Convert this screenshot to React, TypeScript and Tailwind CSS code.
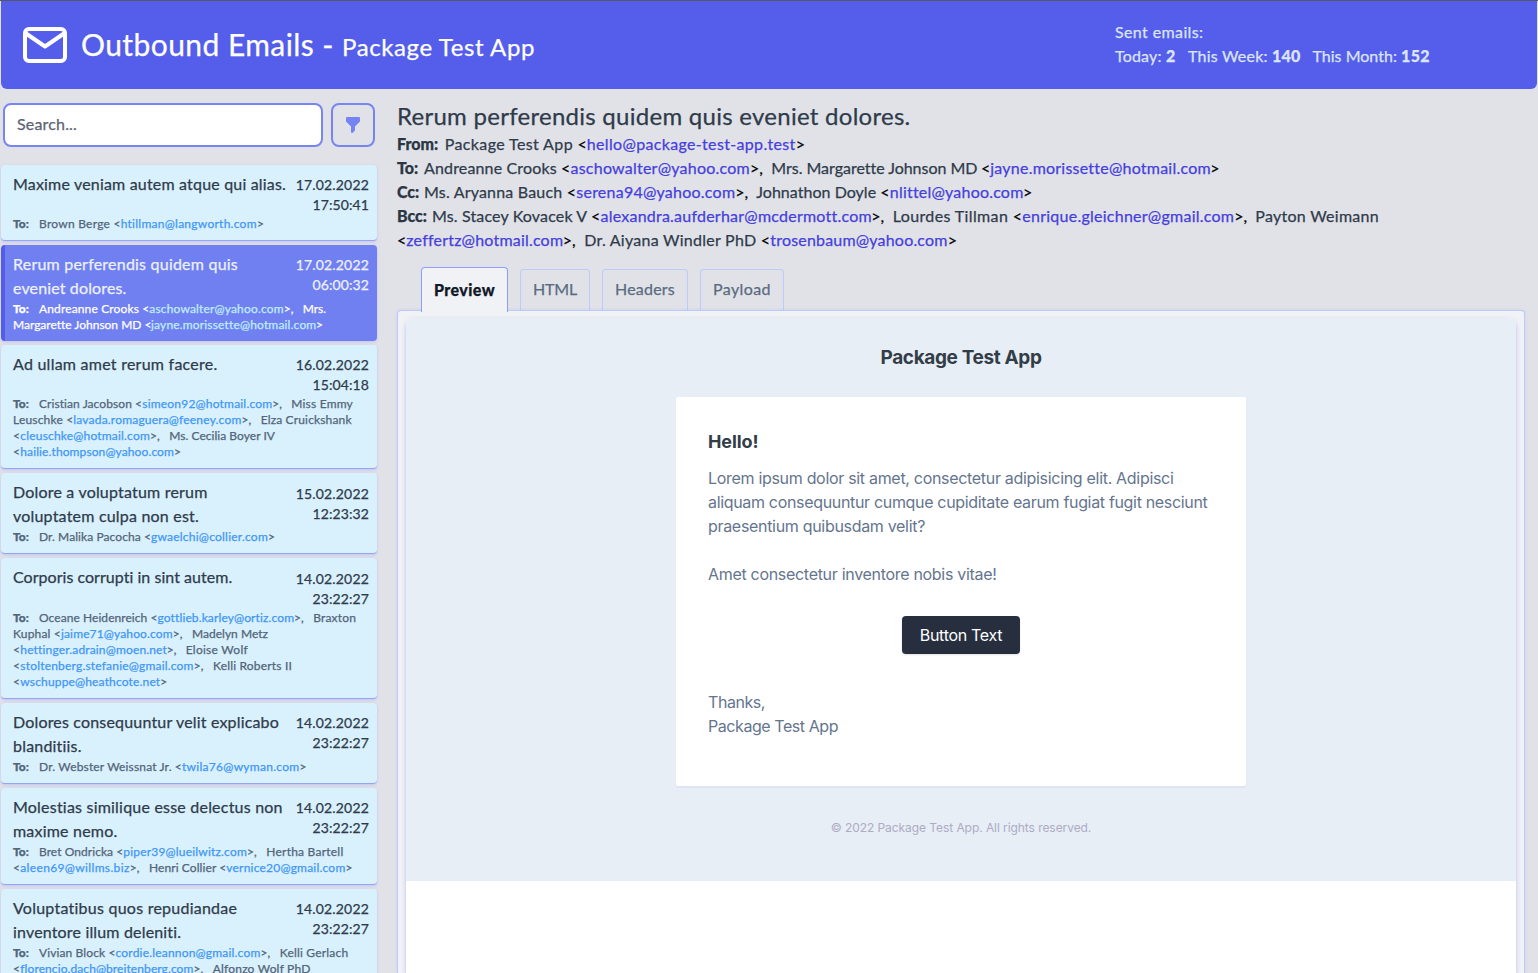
import React, { useLayoutEffect, useRef } from "react";

/** Single run of text whose letter spacing is adjusted to fill a given width. */
function Fit({ w, className = "", children }: { w: number; className?: string; children: string }) {
  const ref = useRef<HTMLSpanElement>(null);
  useLayoutEffect(() => {
    const el = ref.current;
    if (!el) return;
    el.style.letterSpacing = "0px";
    const natural = el.getBoundingClientRect().width;
    el.style.letterSpacing = `${(w - natural) / children.length}px`;
  }, [w, children]);
  return (
    <span className={`inline-block whitespace-pre ${className}`} style={{ width: w }}>
      <span ref={ref}>{children}</span>
    </span>
  );
}

/** label, name, punctuation, email; the number is where the run ends. */
type Run = ["b" | "n" | "p" | "e", string, number];
type Line = Run[];

function RunLine({ runs, origin, tone, className = "" }: { runs: Line; origin: number; tone: Record<string, string>; className?: string }) {
  return (
    <div className={`flex whitespace-pre ${className}`}>
      {runs.map(([kind, text, end], i) => {
        const start = i === 0 ? origin : runs[i - 1][2];
        const w = end - start;
        if (kind === "p" || kind === "b")
          return (
            <span key={i} className={`shrink-0 ${tone[kind]}`} style={{ width: w }}>
              {text}
            </span>
          );
        return (
          <Fit key={i} w={w} className={`shrink-0 ${tone[kind]}`}>
            {text}
          </Fit>
        );
      })}
    </div>
  );
}

type Mail = {
  title: [string, number][];
  date: string;
  time: string;
  active?: boolean;
  tall?: boolean;
  lowDate?: boolean;
  to: Line[];
};

const mails: Mail[] = [
  {
    title: [["Maxime veniam autem atque qui alias.", 273]],
    date: "17.02.2022",
    time: "17:50:41",
    to: [[["b", "To:", 39], ["n", "Brown Berge <", 120.7], ["e", "htillman@langworth.com", 257], ["p", ">", 264]]],
  },
  {
    title: [["Rerum perferendis quidem quis", 225], ["eveniet dolores.", 113.5]],
    date: "17.02.2022",
    time: "06:00:32",
    active: true,
    to: [
      [["b", "To:", 39], ["n", "Andreanne Crooks <", 149.3], ["e", "aschowalter@yahoo.com", 283.7], ["p", ">,", 302.8], ["n", "Mrs.", 326]],
      [["n", "Margarette Johnson MD <", 151], ["e", "jayne.morissette@hotmail.com", 316], ["p", ">", 323]],
    ],
  },
  {
    title: [["Ad ullam amet rerum facere.", 204.5]],
    date: "16.02.2022",
    time: "15:04:18",
    to: [
      [["b", "To:", 39], ["n", "Cristian Jacobson <", 142.3], ["e", "simeon92@hotmail.com", 272.3], ["p", ">,", 291.3], ["n", "Miss Emmy", 353]],
      [["n", "Leuschke <", 73.3], ["e", "lavada.romaguera@feeney.com", 241.5], ["p", ">,", 260.7], ["n", "Elza Cruickshank", 351.7]],
      [["p", "<", 20.3], ["e", "cleuschke@hotmail.com", 150], ["p", ">,", 169.3], ["n", "Ms. Cecilia Boyer IV", 275]],
      [["p", "<", 20.3], ["e", "hailie.thompson@yahoo.com", 174], ["p", ">", 181]],
    ],
  },
  {
    title: [["Dolore a voluptatum rerum", 194.5], ["voluptatem culpa non est.", 186]],
    date: "15.02.2022",
    time: "12:23:32",
    lowDate: true,
    to: [[["b", "To:", 39], ["n", "Dr. Malika Pacocha <", 151], ["e", "gwaelchi@collier.com", 268], ["p", ">", 275]]],
  },
  {
    title: [["Corporis corrupti in sint autem.", 219.5]],
    date: "14.02.2022",
    time: "23:22:27",
    tall: true,
    lowDate: true,
    to: [
      [["b", "To:", 39], ["n", "Oceane Heidenreich <", 157.5], ["e", "gottlieb.karley@ortiz.com", 294], ["p", ">,", 313.3], ["n", "Braxton", 356]],
      [["n", "Kuphal <", 61], ["e", "jaime71@yahoo.com", 172.7], ["p", ">,", 192], ["n", "Madelyn Metz", 268]],
      [["p", "<", 20.3], ["e", "hettinger.adrain@moen.net", 166.7], ["p", ">,", 185.7], ["n", "Eloise Wolf", 248]],
      [["p", "<", 20.3], ["e", "stoltenberg.stefanie@gmail.com", 193.7], ["p", ">,", 213], ["n", "Kelli Roberts II", 292]],
      [["p", "<", 20.3], ["e", "wschuppe@heathcote.net", 160.3], ["p", ">", 167]],
    ],
  },
  {
    title: [["Dolores consequuntur velit explicabo", 266], ["blanditiis.", 69]],
    date: "14.02.2022",
    time: "23:22:27",
    to: [[["b", "To:", 39], ["n", "Dr. Webster Weissnat Jr. <", 182], ["e", "twila76@wyman.com", 299.5], ["p", ">", 306.5]]],
  },
  {
    title: [["Molestias similique esse delectus non", 270], ["maxime nemo.", 104.5]],
    date: "14.02.2022",
    time: "23:22:27",
    to: [
      [["b", "To:", 39], ["n", "Bret Ondricka <", 123.3], ["e", "piper39@lueilwitz.com", 247], ["p", ">,", 266.3], ["n", "Hertha Bartell", 343.5]],
      [["p", "<", 20.3], ["e", "aleen69@willms.biz", 129.7], ["p", ">,", 149], ["n", "Henri Collier <", 226.3], ["e", "vernice20@gmail.com", 345.5], ["p", ">", 352.5]],
    ],
  },
  {
    title: [["Voluptatibus quos repudiandae", 224.5], ["inventore illum deleniti.", 168.5]],
    date: "14.02.2022",
    time: "23:22:27",
    to: [
      [["b", "To:", 39], ["n", "Vivian Block <", 115.5], ["e", "cordie.leannon@gmail.com", 260.5], ["p", ">,", 279.8], ["n", "Kelli Gerlach", 348.3]],
      [["p", "<", 20.3], ["e", "florencio.dach@breitenberg.com", 193.5], ["p", ">,", 212.8], ["n", "Alfonzo Wolf PhD", 310.5]],
    ],
  },
];

const recipients: Line[] = [
  [["b", "From:", 444.7], ["n", "Package Test App ", 577.5], ["p", "<", 586.8], ["e", "hello@package-test-app.test", 795.7], ["p", ">", 805]],
  [["b", "To:", 424], ["n", "Andreanne Crooks ", 561], ["p", "<", 570.5], ["e", "aschowalter@yahoo.com", 750], ["p", ">,", 771.3], ["n", "Mrs. Margarette Johnson MD ", 981], ["p", "<", 990.3], ["e", "jayne.morissette@hotmail.com", 1210.3], ["p", ">", 1219.5]],
  [["b", "Cc:", 424], ["n", "Ms. Aryanna Bauch ", 566.7], ["p", "<", 576.3], ["e", "serena94@yahoo.com", 735.3], ["p", ">,", 756.3], ["n", "Johnathon Doyle ", 880.3], ["p", "<", 889.8], ["e", "nlittel@yahoo.com", 1023], ["p", ">", 1032]],
  [["b", "Bcc:", 432], ["n", "Ms. Stacey Kovacek V ", 591], ["p", "<", 600.5], ["e", "alexandra.aufderhar@mcdermott.com", 871.3], ["p", ">,", 892.7], ["n", "Lourdes Tillman ", 1012.7], ["p", "<", 1022.3], ["e", "enrique.gleichner@gmail.com", 1234.3], ["p", ">,", 1255.3], ["n", "Payton Weimann", 1379]],
  [["p", "<", 406.3], ["e", "zeffertz@hotmail.com", 562.7], ["p", ">,", 584.3], ["n", "Dr. Aiyana Windler PhD ", 760.7], ["p", "<", 770.3], ["e", "trosenbaum@yahoo.com", 947.7], ["p", ">", 957]],
];

const toneNormal = { b: "text-[#526579] font-black", n: "text-[#526579]", p: "text-[#526579]", e: "text-[#3f97f6]" };
const toneActive = { b: "text-white font-black", n: "text-white", p: "text-white", e: "text-[#bdeefd]" };
const toneMain = { b: "text-[#2b3645] font-black", n: "text-[#2f3b4a]", p: "text-black", e: "text-[#453fdc]" };

function MailCard({ mail }: { mail: Mail }) {
  const tone = mail.active ? toneActive : toneNormal;
  return (
    <li
      className={`mb-1 rounded pr-2 pt-2 pb-2 shadow-[0_1px_3px_rgba(129,140,248,0.35)] ${
        mail.active
          ? "border-l-4 border-[#535de9] bg-[#7180f1] pl-2 text-[#edf1fe]"
          : "border-b border-[#93a5fb] bg-[#d9f0fd] pl-3 text-[#2f3b4a]"
      }`}
    >
      <div className={`flex items-start justify-between ${mail.title.length > 1 ? "h-12" : mail.tall ? "h-11" : "h-[43px]"}`}>
        <div className="-mt-px text-base leading-6">
          {mail.title.map(([text, w]) => (
            <div key={text} className="whitespace-nowrap">
              <Fit w={w}>{text}</Fit>
            </div>
          ))}
        </div>
        <div className={`flex shrink-0 flex-col items-end text-sm leading-5 ${mail.lowDate ? "pt-[3px]" : "pt-0.5"}`}>
          <Fit w={73.3}>{mail.date}</Fit>
          <Fit w={56.5}>{mail.time}</Fit>
        </div>
      </div>
      <div className="text-xs leading-4">
        {mail.to.map((line, i) => (
          <RunLine key={i} runs={line} origin={13} tone={tone} />
        ))}
      </div>
    </li>
  );
}

function Header() {
  return (
    <header className="mx-px flex h-22 shrink-0 items-center justify-between rounded-b-md bg-[#545eea] pl-[22px] pr-[107px] text-white">
      <div className="flex items-center">
        <svg className="h-9 w-11" viewBox="0 0 44 36" fill="none" stroke="currentColor" strokeWidth="4" strokeLinecap="round" strokeLinejoin="round">
          <rect x="2" y="2" width="40" height="32" rx="4" />
          <path d="M3 6.5 22 19.5 41 6.5" />
        </svg>
        <h1 className="mb-0.5 ml-3.5 flex items-baseline text-3xl">
          <Fit w={261}>{"Outbound Emails - "}</Fit>
          <Fit w={193} className="text-2xl">Package Test App</Fit>
        </h1>
      </div>
      <div className="mb-0.5 flex flex-col text-base leading-6 text-[#dce4fc]">
        <Fit w={88.5}>Sent emails:</Fit>
        <div className="flex">
          <Fit w={51}>{"Today: "}</Fit>
          <Fit w={10} className="mr-3 font-black">2</Fit>
          <Fit w={84}>{"This Week: "}</Fit>
          <Fit w={28.5} className="mr-3 font-black">140</Fit>
          <Fit w={88.5}>{"This Month: "}</Fit>
          <Fit w={29} className="font-black">152</Fit>
        </div>
      </div>
    </header>
  );
}

const tabs: { label: string; w: number }[] = [
  { label: "HTML", w: 44 },
  { label: "Headers", w: 60 },
  { label: "Payload", w: 58 },
];

function Preview() {
  return (
    <div className="flex flex-1 flex-col rounded-t-lg bg-white font-[Inter,sans-serif] shadow-[0_2px_4px_rgba(129,140,248,0.5)] [-webkit-text-stroke:0]">
      <div className="flex h-[563px] flex-col items-center rounded-t-lg bg-[#e7eef6]">
        <h2 className="mt-[26px] text-[19px] leading-7 font-bold text-[#333d47]">
          <Fit w={161}>Package Test App</Fit>
        </h2>
        <div className="mt-[25px] flex h-[389px] w-[570px] flex-col rounded-[2px] bg-white px-8 pt-[33px] text-base leading-6 text-[#65758e] shadow-[0_2px_2px_rgba(60,60,190,0.06)]">
          <h3 className="text-lg leading-6 font-bold text-[#333d47]">
            <Fit w={50.5}>Hello!</Fit>
          </h3>
          <p className="mt-3 flex flex-col">
            <Fit w={465.5}>Lorem ipsum dolor sit amet, consectetur adipisicing elit. Adipisci</Fit>
            <Fit w={499.5}>aliquam consequuntur cumque cupiditate earum fugiat fugit nesciunt</Fit>
            <Fit w={217}>praesentium quibusdam velit?</Fit>
          </p>
          <p className="mt-6">
            <Fit w={288.5}>Amet consectetur inventore nobis vitae!</Fit>
          </p>
          <button className="mt-[30px] h-[38px] w-[118px] shrink-0 self-center rounded bg-[#272f3f] text-white shadow-[0_1px_2px_rgba(0,0,0,0.12)]">
            <Fit w={82.5}>Button Text</Fit>
          </button>
          <p className="mt-9 flex flex-col">
            <Fit w={57}>Thanks,</Fit>
            <Fit w={130}>Package Test App</Fit>
          </p>
        </div>
        <p className="mt-8 text-xs leading-5 text-[#aeabc4]">
          <Fit w={260.5}>© 2022 Package Test App. All rights reserved.</Fit>
        </p>
      </div>
    </div>
  );
}

export default function App() {
  return (
    <div className="flex h-[973px] w-[1538px] flex-col overflow-hidden border-t border-[#555761] bg-[#e1e2e8] font-[Lato,sans-serif] [-webkit-text-stroke:0.25px]">
      <Header />
      <div className="flex min-h-0 flex-1">
        <aside className="ml-px w-[376px] shrink-0">
          <div className="mt-3.5 mb-[18px] ml-0.5 flex gap-2">
            <div className="flex h-11 w-80 items-center rounded-lg border-2 border-[#7785f3] bg-white pb-0.5 pl-3 text-base text-[#5b6472]">
              <Fit w={60}>Search...</Fit>
            </div>
            <button className="flex h-11 w-11 items-center justify-center rounded-lg border-2 border-[#7785f3] text-[#7484f3]">
              <svg className="size-5" viewBox="0 0 20 20" fill="currentColor">
                <path d="M3 3a1 1 0 011-1h12a1 1 0 011 1v3a1 1 0 01-.293.707L12 11.414V15a1 1 0 01-.293.707l-2 2A1 1 0 018 17v-5.586L3.293 6.707A1 1 0 013 6V3z" />
              </svg>
            </button>
          </div>
          <ul>
            {mails.map((mail, i) => (
              <MailCard key={i} mail={mail} />
            ))}
          </ul>
        </aside>
        <main className="ml-5 flex w-[1128px] flex-col pt-[11px]">
          <h2 className="text-2xl leading-8 text-[#2f3b4a]">
            <Fit w={513.5}>Rerum perferendis quidem quis eveniet dolores.</Fit>
          </h2>
          <div className="text-base leading-6">
            {recipients.map((line, i) => (
              <RunLine key={i} runs={line} origin={397} tone={toneMain} />
            ))}
          </div>
          <nav className="mt-[15px] flex items-end gap-3 pl-6 leading-6">
            <div className="relative z-10 -mb-0.5 h-[45px] w-[87px] rounded-t border border-b-0 border-[#8f9ff9] bg-[#f1f2f5] pt-2.5 pl-3 font-black text-[#111827]">
              <Fit w={61}>Preview</Fit>
            </div>
            {tabs.map((tab) => (
              <div key={tab.label} className="h-[41px] rounded-t border border-b-0 border-[#bccafc] px-3 pt-[7px] text-[#5a6b80]">
                <Fit w={tab.w}>{tab.label}</Fit>
              </div>
            ))}
          </nav>
          <div className="flex min-h-0 flex-1 flex-col rounded-t border border-b-0 border-[#bccafc] bg-[#f1f2f5] px-2 pt-[7px] shadow-[0_0_3px_rgba(129,140,248,0.25)]">
            <Preview />
          </div>
        </main>
      </div>
    </div>
  );
}
